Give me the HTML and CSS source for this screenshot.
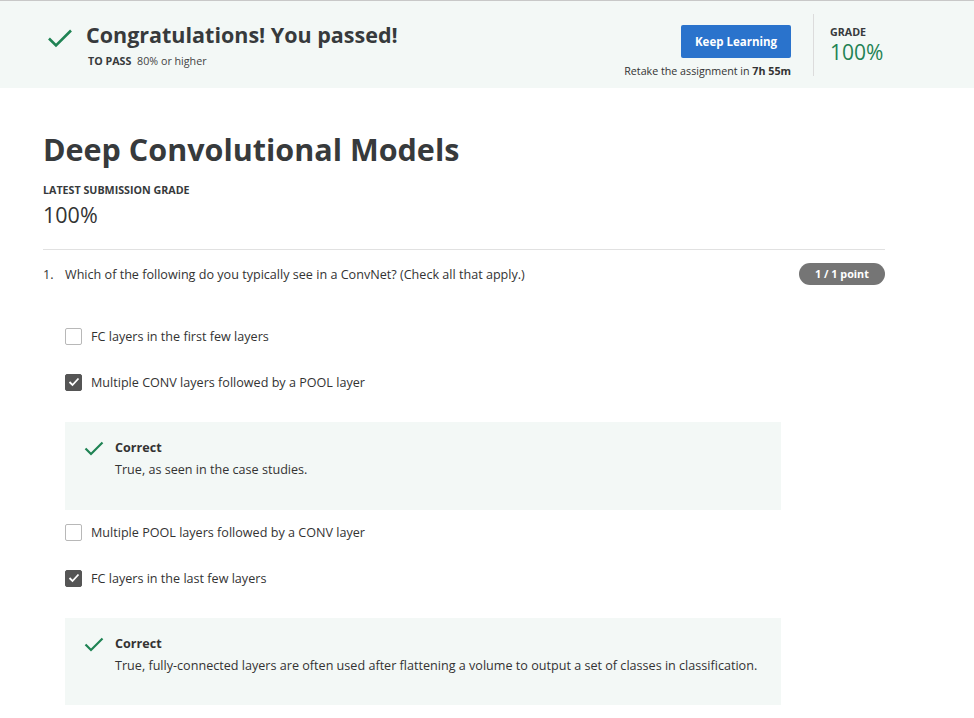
FILE: index.html
```html
<!DOCTYPE html>
<html>
<head>
<meta charset="utf-8">
<link rel="stylesheet" href="styles.css">
</head>
<body>
<header class="banner">
  <div class="banner-left">
    <svg class="banner-check" width="26" height="20" viewBox="0 0 26 20"><path d="M2 10.5 L9 17.5 L24 2.5" fill="none" stroke="#1f8354" stroke-width="2.6"/></svg>
    <div class="banner-text">
      <h2 class="banner-title">Congratulations! You passed!</h2>
      <div class="banner-sub"><span class="label">TO PASS</span> 80% or higher</div>
    </div>
  </div>
  <div class="banner-right">
    <div class="action">
      <button class="btn">Keep Learning</button>
      <div class="retake">Retake the assignment in <b>7h 55m</b></div>
    </div>
    <div class="grade">
      <div class="label">GRADE</div>
      <div class="grade-value">100%</div>
    </div>
  </div>
</header>
<main class="content">
  <h1 class="page-title">Deep Convolutional Models</h1>
  <div class="label sub-label">LATEST SUBMISSION GRADE</div>
  <div class="latest-grade">100%</div>
  <hr class="divider">
  <div class="question">
    <div class="q-head">
      <span class="q-num">1.</span>
      <span class="q-text">Which of the following do you typically see in a ConvNet? (Check all that apply.)</span>
      <span class="pill">1 / 1 point</span>
    </div>
    <div class="options">
      <div class="option"><span class="box"></span><span>FC layers in the first few layers</span></div>
      <div class="option"><span class="box checked"><svg width="12" height="10" viewBox="0 0 12 10"><path d="M1.5 5 L4.5 8 L10.5 1.5" fill="none" stroke="#fff" stroke-width="1.8"/></svg></span><span>Multiple CONV layers followed by a POOL layer</span></div>
      <div class="feedback">
        <svg class="fb-check" width="20" height="15" viewBox="0 0 20 15"><path d="M1.5 7.5 L7 13 L18.5 1.5" fill="none" stroke="#1f8354" stroke-width="2.2"/></svg>
        <div>
          <div class="fb-title">Correct</div>
          <div class="fb-text">True, as seen in the case studies.</div>
        </div>
      </div>
      <div class="option"><span class="box"></span><span>Multiple POOL layers followed by a CONV layer</span></div>
      <div class="option"><span class="box checked"><svg width="12" height="10" viewBox="0 0 12 10"><path d="M1.5 5 L4.5 8 L10.5 1.5" fill="none" stroke="#fff" stroke-width="1.8"/></svg></span><span>FC layers in the last few layers</span></div>
      <div class="feedback">
        <svg class="fb-check" width="20" height="15" viewBox="0 0 20 15"><path d="M1.5 7.5 L7 13 L18.5 1.5" fill="none" stroke="#1f8354" stroke-width="2.2"/></svg>
        <div>
          <div class="fb-title">Correct</div>
          <div class="fb-text">True, fully-connected layers are often used after flattening a volume to output a set of classes in classification.</div>
        </div>
      </div>
    </div>
  </div>
</main>
</body>
</html>
```
FILE: styles.css
```css
* { box-sizing: border-box; }
body {
  margin: 0;
  font-family: "Open Sans", "Liberation Sans", sans-serif;
  color: #373a3c;
  background: #fff;
}
.banner {
  border-top: 1px solid #c8c8c8;
  background: #f3f8f6;
  height: 88px;
  display: flex;
  justify-content: space-between;
  padding: 0 89px 0 47px;
}
.banner-left {
  display: flex;
  align-items: flex-start;
  padding-top: 23px;
}
.banner-check { margin-top: 4px; margin-right: 13px; }
.banner-title {
  margin: 0;
  font-size: 21.5px;
  font-weight: 700;
  line-height: 22px;
  color: #373a3c;
}
.banner-sub {
  margin-top: 8px;
  margin-left: 2px;
  font-size: 10.7px;
  color: #444;
}
.label {
  font-size: 10.7px;
  font-weight: 700;
  color: #373a3c;
  line-height: 14px;
}
.banner-sub .label { margin-right: 3px; }
.banner-right {
  display: flex;
  align-items: flex-start;
  padding-top: 13px;
}
.action {
  display: flex;
  flex-direction: column;
  align-items: flex-end;
  padding-top: 11px;
  margin-right: 22px;
}
.btn {
  width: 110px;
  height: 33px;
  border: none;
  border-radius: 2px;
  background: #2a73cc;
  color: #fff;
  font-family: inherit;
  font-size: 11.5px;
  font-weight: 700;
}
.retake {
  margin-top: 6px;
  font-size: 10.7px;
  color: #333;
}
.grade {
  border-left: 1px solid #dcdcdc;
  padding-left: 16px;
  width: 72px;
  height: 62px;
  padding-top: 11px;
}
.grade-value {
  font-size: 21px;
  color: #1f8354;
  line-height: 26px;
}
.content {
  padding: 0 89px 0 43px;
}
.page-title {
  margin: 0;
  padding-top: 41px;
  font-size: 30.5px;
  line-height: 40px;
  font-weight: 700;
  color: #373a3c;
}
.sub-label { margin-top: 14px; }
.latest-grade {
  font-size: 21.5px;
  line-height: 28px;
  margin-top: 4px;
  color: #333;
}
.divider {
  border: none;
  border-top: 1px solid #e1e1e1;
  margin: 20px 0 0;
}
.q-head {
  display: flex;
  align-items: center;
  margin-top: 13px;
  font-size: 12.6px;
  color: #333;
}
.q-num { width: 22px; }
.q-text { flex: 1; }
.pill {
  background: #757575;
  color: #fff;
  font-weight: 700;
  font-size: 10.8px;
  border-radius: 11px;
  width: 86px;
  height: 22px;
  line-height: 22px;
  text-align: center;
}
.options {
  padding-left: 22px;
  margin-top: 28px;
  display: flex;
  flex-direction: column;
}
.option {
  display: flex;
  align-items: center;
  height: 46px;
  font-size: 12.6px;
  color: #333;
}
.box {
  width: 17px;
  height: 17px;
  border: 1px solid #b8b8b8;
  border-radius: 2px;
  margin-right: 9px;
  display: flex;
  align-items: center;
  justify-content: center;
  background: #fff;
}
.box.checked {
  background: #555;
  border-color: #555;
}
.feedback {
  margin: 17px 104px 0 0;
  background: #f3f8f6;
  height: 88px;
  padding: 18px 0 0 19px;
  display: flex;
  align-items: flex-start;
  margin-bottom: -1px;
}
.fb-check { margin-right: 11px; margin-top: 1px; }
.fb-title {
  font-size: 12.6px;
  font-weight: 700;
  color: #333;
  line-height: 16px;
}
.fb-text {
  margin-top: 6px;
  font-size: 12.6px;
  color: #333;
  line-height: 16px;
}
```
